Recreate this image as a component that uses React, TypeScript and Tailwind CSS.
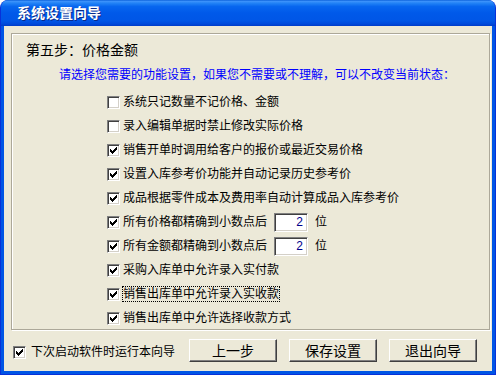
const rows = [
  { label: "系统只记数量不记价格、金额", checked: false },
  { label: "录入编辑单据时禁止修改实际价格", checked: false },
  { label: "销售开单时调用给客户的报价或最近交易价格", checked: true },
  { label: "设置入库参考价功能并自动记录历史参考价", checked: true },
  { label: "成品根据零件成本及费用率自动计算成品入库参考价", checked: true },
  { label: "所有价格都精确到小数点后", checked: true, digits: "2" },
  { label: "所有金额都精确到小数点后", checked: true, digits: "2" },
  { label: "采购入库单中允许录入实付款", checked: true },
  { label: "销售出库单中允许录入实收款", checked: true, focus: true },
  { label: "销售出库单中允许选择收款方式", checked: true },
];

const CheckBox = ({ checked }: { checked: boolean }) => (
  <span className="flex h-[13px] w-[13px] shrink-0 items-center justify-center border border-b-white border-l-[#808080] border-r-white border-t-[#808080] bg-white shadow-[inset_1px_1px_0_#404040,inset_-1px_-1px_0_#d4d0c8]">
    {checked && (
      <svg width="7" height="7" viewBox="0 0 7 7" shapeRendering="crispEdges">
        <g fill="#000">
          <rect x="6" y="0" width="1" height="1" />
          <rect x="5" y="1" width="2" height="1" />
          <rect x="0" y="2" width="1" height="1" />
          <rect x="4" y="2" width="3" height="1" />
          <rect x="0" y="3" width="2" height="1" />
          <rect x="3" y="3" width="3" height="1" />
          <rect x="0" y="4" width="5" height="1" />
          <rect x="1" y="5" width="3" height="1" />
          <rect x="2" y="6" width="1" height="1" />
        </g>
      </svg>
    )}
  </span>
);

const Button = ({ label }: { label: string }) => (
  <button className="flex h-[23px] w-[88px] items-center justify-center border border-b-[#404040] border-l-white border-r-[#404040] border-t-white bg-[#ece9d8] text-[14px] leading-[16px] text-black shadow-[inset_-1px_-1px_0_#808080]">
    {label}
  </button>
);

export default function App() {
  return (
    <div className="h-[375px] w-[500px] bg-white font-['Liberation_Sans','Noto_Sans_CJK_SC',sans-serif]">
      <div className="flex h-[375px] w-[496px] flex-col overflow-hidden rounded-t-[8px] border-x border-b border-[#0831d9] bg-[#0055e5]">
        {/* title bar */}
        <div className="flex h-[26px] shrink-0 items-center bg-[linear-gradient(to_bottom,#0a5fd9_0%,#3d93fb_5%,#2283f6_12%,#0766ef_25%,#0059e9_50%,#0056e6_80%,#004adb_92%,#003cc8_100%)] pl-[16px]">
          <span className="text-[14px] font-bold leading-[16px] text-white [text-shadow:1px_1px_0_#0a2a8a]">
            系统设置向导
          </span>
        </div>

        {/* client area */}
        <div className="mx-[3px] mb-[3px] flex flex-1 flex-col bg-[#ece9d8]">
          <div className="ml-[7px] mr-[2px] mt-[7px] flex h-[297px] flex-col border border-[#aca899] pl-[14px] pt-[8px] shadow-[inset_1px_1px_0_#fff,1px_1px_0_#fff]">
            <div className="text-[14px] leading-[16px] text-black">第五步：价格金额</div>
            <div className="ml-[33px] mt-[9px] text-[12px] leading-[16px] text-[#0000ff]">
              请选择您需要的功能设置，如果您不需要或不理解，可以不改变当前状态：
            </div>
            <div className="ml-[81px] mt-[7px] flex flex-col">
              {rows.map((r) => (
                <div key={r.label} className="flex h-[24px] items-center gap-[3px]">
                  <CheckBox checked={r.checked} />
                  <span
                    className={
                      r.focus
                        ? "-ml-[1px] border border-dotted border-black text-[12px] leading-[14px] text-black"
                        : "text-[12px] leading-[16px] text-black"
                    }
                  >
                    {r.label}
                  </span>
                  {r.digits && (
                    <>
                      <span className="ml-[4px] flex h-[19px] w-[34px] items-center justify-end border border-b-white border-l-[#808080] border-r-white border-t-[#808080] bg-white pr-[4px] text-[12px] text-[#00008b] shadow-[inset_1px_1px_0_#404040,inset_-1px_-1px_0_#d4d0c8]">
                        {r.digits}
                      </span>
                      <span className="ml-[4px] text-[12px] leading-[16px] text-black">位</span>
                    </>
                  )}
                </div>
              ))}
            </div>
          </div>

          {/* bottom bar */}
          <div className="flex flex-1 items-center pl-[9px] pr-[15px]">
            <div className="mt-[3px] flex items-center gap-[5px]">
              <CheckBox checked />
              <span className="text-[12px] leading-[16px] text-black">下次启动软件时运行本向导</span>
            </div>
            <div className="ml-auto flex items-center gap-[12px]">
              <Button label="上一步" />
              <Button label="保存设置" />
              <Button label="退出向导" />
            </div>
          </div>
        </div>
      </div>
    </div>
  );
}
